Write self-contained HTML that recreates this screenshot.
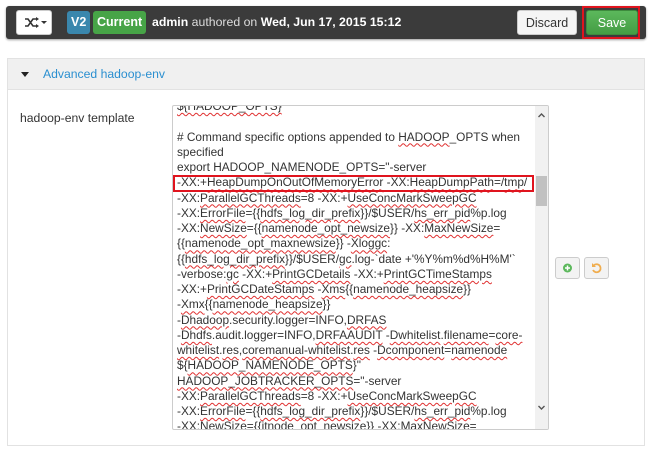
<!DOCTYPE html>
<html><head><meta charset="utf-8">
<style>
*{box-sizing:border-box;margin:0;padding:0}
body{width:650px;height:454px;background:#fff;font-family:"Liberation Sans",Arial,sans-serif;position:relative;overflow:hidden}
.bar{position:absolute;left:6px;top:6px;width:640px;height:33px;background:#3b3b3b;border-radius:3px;box-shadow:0 1px 2px rgba(0,0,0,.4)}
.btn{position:absolute;border-radius:3px;font-size:12.5px;text-align:center}
.shuf{left:10px;top:4px;width:36px;height:25px;background:#fff;border:1px solid #ccc}
.lbl{position:absolute;top:5px;height:23px;line-height:23px;color:#fff;font-weight:bold;font-size:12.5px;border-radius:3px;padding:0 4px}
.meta{position:absolute;left:146px;top:5px;line-height:23px;color:#ddd;font-size:12.3px}
.meta b{color:#fff}
.discard{left:511px;top:4px;width:60px;height:25px;line-height:24px;background:#f5f5f5;border:1px solid #ccc;color:#333}
.save{left:580px;top:4px;width:52px;height:25px;line-height:24px;background:linear-gradient(#5cb85c,#449d44);color:#fff;border:1px solid #3d8b3d}
.red{position:absolute;border:2px solid #e0141e}
.panel{position:absolute;left:7px;top:58px;width:638px;height:388px;border:1px solid #e2e2e2}
.ph{height:31px;background:#f0f0f0;border-bottom:1px solid #e2e2e2;position:relative}
.ph .t{position:absolute;left:35px;top:8px;color:#2a8fd0;font-size:12.2px}
.tri{position:absolute;left:13px;top:13px;width:0;height:0;border-left:4px solid transparent;border-right:4px solid transparent;border-top:5px solid #222}
.flab{position:absolute;left:20px;top:111px;font-size:12.2px;color:#333}
.ta{position:absolute;left:172px;top:105px;width:377px;height:325px;border:1px solid #ccc;border-radius:2px;overflow:hidden;background:#fff}
.txt{position:absolute;left:4px;top:-7px;width:360px;font-size:11.85px;line-height:15.25px;color:#333;white-space:pre}
.u{text-decoration:underline wavy #e03030;text-decoration-thickness:1px;text-underline-offset:2px}
.sb{position:absolute;right:0;top:0;width:13px;height:100%;background:#f1f1f1}
.thumb{position:absolute;left:1px;top:70px;width:11px;height:30px;background:#c1c1c1}
.sbtn{position:absolute;top:257px;width:25px;height:22px;background:#f3f3f3;border:1px solid #ccc;border-radius:3px}
</style></head><body>
<div class="bar">
 <div class="btn shuf"><svg width="34" height="23" viewBox="0 0 34 23"><path d="M8 8h3l5 7h3M8 15h3l5-7h3" fill="none" stroke="#333" stroke-width="1.6"/><path d="M19 6l3 2-3 2zM19 13l3 2-3 2z" fill="#333"/><path d="M24 10h6l-3 3z" fill="#333"/></svg></div>
 <div class="lbl" style="left:61px;background:#3a87ad">V2</div>
 <div class="lbl" style="left:87px;background:#47a447">Current</div>
 <div class="meta"><b>admin</b> authored on <b>Wed, Jun 17, 2015 15:12</b></div>
 <div class="btn discard">Discard</div>
 <div class="btn save">Save</div>
</div>
<div class="red" style="left:582px;top:6px;width:58px;height:33px"></div>
<div class="panel"><div class="ph"><div class="tri"></div><div class="t">Advanced hadoop-env</div></div></div>
<div class="flab">hadoop-env template</div>
<div class="ta">
<div class="txt"><span class="u">${HADOOP_OPTS}</span>

# Command specific options appended to <span class="u">HADOOP</span>_OPTS when
specified
export HADOOP_NAMENODE_OPTS="-server
-XX:+<span class="u">HeapDumpOnOutOfMemoryError</span> -XX:<span class="u">HeapDumpPath</span>=/<span class="u">tmp</span>/
-XX:<span class="u">ParallelGCThreads</span>=8 -XX:+<span class="u">UseConcMarkSweepGC</span>
-XX:<span class="u">ErrorFile</span>={{<span class="u">hdfs_log_dir_prefix</span>}}/$USER/<span class="u">hs_err_pid</span>%p.log
-XX:<span class="u">NewSize</span>={{<span class="u">namenode_opt_newsize</span>}} -XX:<span class="u">MaxNewSize</span>=
{{<span class="u">namenode_opt_maxnewsize</span>}} -<span class="u">Xloggc</span>:
{{<span class="u">hdfs_log_dir_prefix</span>}}/$USER/<span class="u">gc</span>.log-`date +'%Y%m%d%H%M'`
-verbose:<span class="u">gc</span> -XX:+<span class="u">PrintGCDetails</span> -XX:+<span class="u">PrintGCTimeStamps</span>
-XX:+<span class="u">PrintGCDateStamps</span> -<span class="u">Xms</span>{{<span class="u">namenode_heapsize</span>}}
-<span class="u">Xmx</span>{{<span class="u">namenode_heapsize</span>}}
-<span class="u">Dhadoop</span>.security.logger=INFO,<span class="u">DRFAS</span>
-<span class="u">Dhdfs</span>.audit.logger=INFO,<span class="u">DRFAAUDIT</span> -<span class="u">Dwhitelist</span>.<span class="u">filename</span>=<span class="u">core-</span>
<span class="u">whitelist</span>.<span class="u">res</span>,<span class="u">coremanual-whitelist</span>.<span class="u">res</span> -<span class="u">Dcomponent</span>=<span class="u">namenode</span>
${<span class="u">HADOOP_NAMENODE_OPTS</span>}"
<span class="u">HADOOP_JOBTRACKER_OPTS</span>="-server
-XX:<span class="u">ParallelGCThreads</span>=8 -XX:+<span class="u">UseConcMarkSweepGC</span>
-XX:<span class="u">ErrorFile</span>={{<span class="u">hdfs_log_dir_prefix</span>}}/$USER/<span class="u">hs_err_pid</span>%p.log
-XX:<span class="u">NewSize</span>={{<span class="u">jtnode_opt_newsize</span>}} -XX:<span class="u">MaxNewSize</span>=</div>
<div class="sb"><div class="thumb"></div>
<svg style="position:absolute;left:3px;top:7px" width="7" height="5"><path d="M0.5 4L3.5 1 6.5 4" fill="none" stroke="#555" stroke-width="1.4"/></svg>
<svg style="position:absolute;left:3px;top:299px" width="7" height="5"><path d="M0.5 1L3.5 4 6.5 1" fill="none" stroke="#555" stroke-width="1.4"/></svg>
</div>
</div>
<div class="red" style="left:173px;top:175px;width:361px;height:17px"></div>
<div class="sbtn" style="left:555px"><svg width="23" height="20"><circle cx="11.5" cy="10" r="4.5" fill="#5cb85c"/><path d="M11.5 7.5v5M9 10h5" stroke="#fff" stroke-width="1.5"/></svg></div>
<div class="sbtn" style="left:584px"><svg width="23" height="20"><path d="M9 7.2A4 4 0 1 1 8 12" fill="none" stroke="#f0ad4e" stroke-width="1.8"/><path d="M7 5v4h4z" fill="#f0ad4e"/></svg></div>
</body></html>
